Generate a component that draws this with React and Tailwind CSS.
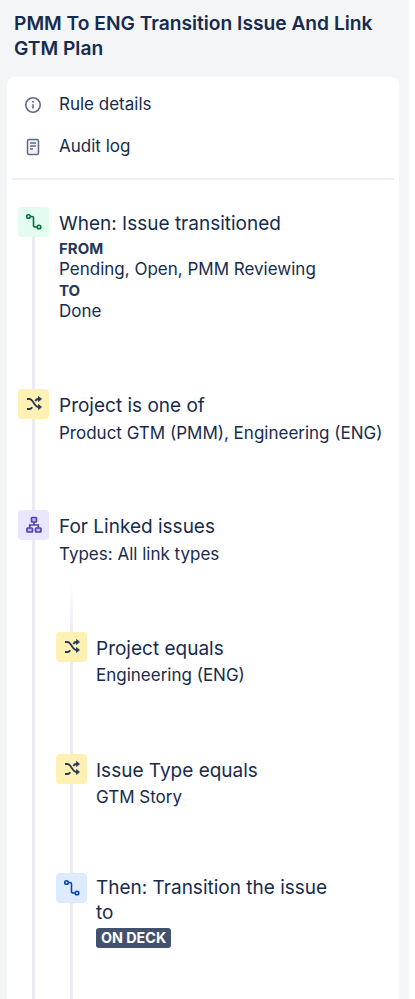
const BranchIcon = ({ color }) => (
    <svg width="18" height="18" viewBox="0 0 18 18" fill="none" stroke={color} strokeWidth="1.6">
        <circle cx="3.5" cy="3.5" r="1.8" />
        <circle cx="14" cy="14" r="1.8" />
        <path d="M5.3 3.5H7a1.5 1.5 0 0 1 1.5 1.5v7.5A1.5 1.5 0 0 0 10 14h2.2" />
    </svg>
);

const TreeIcon = () => (
    <svg width="18" height="18" viewBox="0 0 18 18" fill="#c0b6f2" stroke="#5243aa" strokeWidth="1.7">
        <rect x="6.5" y="1.5" width="5" height="4.500" rx="0.8" />
        <rect x="2" y="12" width="5.500" height="4" rx="0.8" />
        <rect x="10.500" y="12" width="5.500" height="4" rx="0.8" />
        <path d="M9 6v3M4.750 12V9h8.500v3" fill="none" />
    </svg>
);

const InfoIcon = () => (
    <svg width="18" height="18" viewBox="0 0 18 18" fill="none" stroke="#5e6c84" strokeWidth="1.6">
        <circle cx="9" cy="9" r="7.200" />
        <path d="M9 8.300v4.200" />
        <path d="M9 5v1.600" strokeWidth="1.900" />
    </svg>
);

const LogIcon = () => (
    <svg width="18" height="18" viewBox="0 0 18 18" fill="none" stroke="#5e6c84" strokeWidth="1.500">
        <rect x="3.500" y="1.500" width="11" height="15" rx="1.500" fill="#f1f2f5" />
        <path d="M6 5h6M6 8h6M6 11h3" />
    </svg>
);

const ShuffleIcon = () => (
    <svg width="18" height="18" viewBox="0 0 18 18" fill="none" stroke="#253858" strokeWidth="1.800">
        <path d="M2 4h2.500c1.500 0 2.300 1 3.300 2.500l2 3c1 1.500 1.800 2.500 3.300 2.500h1" />
        <path d="M2 14h2.500c1.300 0 2-.7 2.800-1.800M10.300 6C11 4.800 11.700 4 13.100 4h1" />
        <path d="M13.500 1.500 16.500 4l-3 2.500zM13.500 9.500l3 2.500-3 2.500z" fill="#253858" strokeWidth="0.800" strokeLinejoin="round" />
    </svg>
);

const Badge = ({ bg, children }) => (
    <div className={`w-[31px] h-[30px] rounded-[4px] flex items-center justify-center shrink-0 ${bg}`}>{children}</div>
);

const Line = () => <div className="w-[3px] flex-1 bg-[#ebecf3]" />;

const Step = ({ icon, bg, title, children, pb, gap = 'gap-[10px]', titleMt = 'mt-[4px]' }) => (
    <div className={`flex ${gap}`}>
        <div className="flex flex-col items-center w-[31px] shrink-0">
            <Badge bg={bg}>{icon}</Badge>
            <Line />
        </div>
        <div className={`flex-1 ${pb}`}>
            <div className={`text-[19px] leading-[25px] text-[#172b4d] ${titleMt}`}>{title}</div>
            {children}
        </div>
    </div>
);

const Sub = ({ children, mt = '' }) => <div className={`text-[17px] leading-[21px] text-[#172b4d] ${mt}`}>{children}</div>;
const Label = ({ children, mt = '' }) => <div className={`text-[15px] leading-[21px] font-bold text-[#253858] ${mt}`}>{children}</div>;

export default function App() {
    return (
        <div className="w-[409px] h-[999px] overflow-hidden bg-[#f4f5f7] pl-[7px] pr-[10px] font-['Inter',sans-serif]">
            <h1 className="pl-[7px] pt-[11px] pb-[16px] text-[19.2px] leading-[25px] font-semibold text-[#172b4d]">
                PMM To ENG Transition Issue And Link GTM Plan
            </h1>
            <div className="bg-white rounded-t-[8px] h-[922px] px-[5px]">
                <div className="pt-[7px] pb-[10px] border-b-2 border-[#eeeef4]">
                    <div className="flex items-center h-[42px] text-[17px] text-[#172b4d]">
                        <div className="w-[47px] pl-[12px]"><InfoIcon /></div>
                        Rule details
                    </div>
                    <div className="flex items-center h-[42px] text-[17px] text-[#172b4d]">
                        <div className="w-[47px] pl-[12px]"><LogIcon /></div>
                        Audit log
                    </div>
                </div>
                <div className="pl-[6px] pt-[27px]">
                    <Step bg="bg-[#e3fcef]" icon={<BranchIcon color="#00703f" />} title="When: Issue transitioned" pb="pb-[67px]">
                        <Label mt="mt-[2px]">FROM</Label>
                        <Sub>Pending, Open, PMM Reviewing</Sub>
                        <Label>TO</Label>
                        <Sub>Done</Sub>
                    </Step>
                    <Step bg="bg-[#fff0b3]" icon={<ShuffleIcon />} title="Project is one of" pb="pb-[66px]">
                        <Sub mt="mt-[5px]">Product GTM (PMM), Engineering (ENG)</Sub>
                    </Step>
                    <div className="flex gap-[7px]">
                        <div className="flex flex-col items-center w-[31px] shrink-0">
                            <Badge bg="bg-[#eae6ff]"><TreeIcon /></Badge>
                            <Line />
                        </div>
                        <div className="flex-1 pr-[60px]">
                            <div className="pl-[3px]">
                                <div className="text-[19px] leading-[25px] mt-[4px] text-[#172b4d]">For Linked issues</div>
                                <Sub mt="mt-[5px]">Types: All link types</Sub>
                            </div>
                            <div className="w-[31px] h-[67px] flex justify-center pt-[20px]">
                                <div className="w-[3px] bg-gradient-to-b from-white to-[#ebecf3]" />
                            </div>
                            <Step gap="gap-[9px]" bg="bg-[#fff0b3]" icon={<ShuffleIcon />} title="Project equals" pb="pb-[68px]">
                                <Sub mt="mt-[4px]">Engineering (ENG)</Sub>
                            </Step>
                            <Step gap="gap-[9px]" bg="bg-[#fff0b3]" icon={<ShuffleIcon />} title="Issue Type equals" pb="pb-[65px]">
                                <Sub mt="mt-[4px]">GTM Story</Sub>
                            </Step>
                            <Step gap="gap-[9px]" titleMt="mt-[2px]" bg="bg-[#deebff]" icon={<BranchIcon color="#0747a6" />} title="Then: Transition the issue to" pb="pb-[120px]">
                                <span className="inline-block bg-[#42526e] text-white text-[14.3px] leading-[20px] font-bold px-[5px] rounded-[3px]">ON DECK</span>
                            </Step>
                        </div>
                    </div>
                </div>
            </div>
        </div>
    );
}
